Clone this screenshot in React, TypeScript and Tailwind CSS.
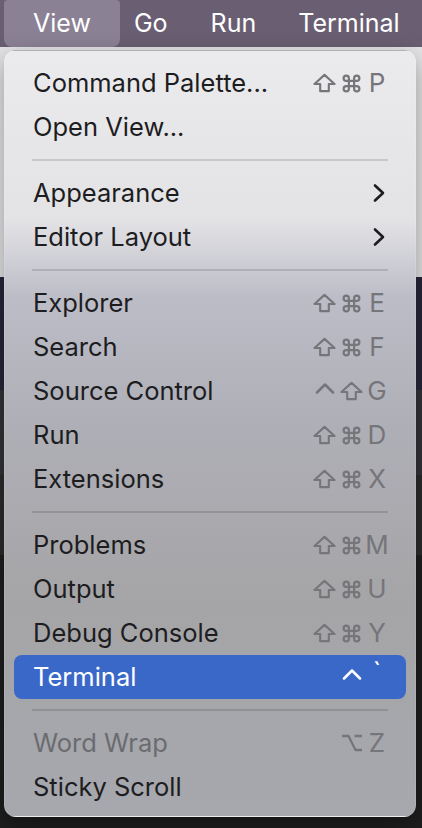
import React from 'react'

type Key = 'shift' | 'cmd' | 'ctrl' | 'opt' | string

type Item =
  | { kind: 'sep' }
  | { kind: 'item'; label: string; keys?: Key[]; submenu?: boolean; disabled?: boolean; active?: boolean }

const items: Item[] = [
  { kind: 'item', label: 'Command Palette...', keys: ['shift', 'cmd', 'P'] },
  { kind: 'item', label: 'Open View...' },
  { kind: 'sep' },
  { kind: 'item', label: 'Appearance', submenu: true },
  { kind: 'item', label: 'Editor Layout', submenu: true },
  { kind: 'sep' },
  { kind: 'item', label: 'Explorer', keys: ['shift', 'cmd', 'E'] },
  { kind: 'item', label: 'Search', keys: ['shift', 'cmd', 'F'] },
  { kind: 'item', label: 'Source Control', keys: ['ctrl', 'shift', 'G'] },
  { kind: 'item', label: 'Run', keys: ['shift', 'cmd', 'D'] },
  { kind: 'item', label: 'Extensions', keys: ['shift', 'cmd', 'X'] },
  { kind: 'sep' },
  { kind: 'item', label: 'Problems', keys: ['shift', 'cmd', 'M'] },
  { kind: 'item', label: 'Output', keys: ['shift', 'cmd', 'U'] },
  { kind: 'item', label: 'Debug Console', keys: ['shift', 'cmd', 'Y'] },
  { kind: 'item', label: 'Terminal', keys: ['', 'ctrl', '`'], active: true },
  { kind: 'sep' },
  { kind: 'item', label: 'Word Wrap', keys: ['', 'opt', 'Z'], disabled: true },
  { kind: 'item', label: 'Sticky Scroll' },
]

function Glyph({ k }: { k: Key }) {
  if (k === 'shift')
    return (
      <svg width="23" height="20" viewBox="0 0 24 20" fill="none" stroke="currentColor" strokeWidth="2.2" strokeLinejoin="round">
        <path d="M12 1.5 L22.5 11 H16.5 V18.5 H7.5 V11 H1.5 Z" />
      </svg>
    )
  if (k === 'cmd')
    return (
      <svg width="21" height="21" viewBox="0 0 24 24" fill="none" stroke="currentColor" strokeWidth="2.5" strokeLinecap="round" strokeLinejoin="round">
        <path d="M15 6v12a3 3 0 1 0 3-3H6a3 3 0 1 0 3 3V6a3 3 0 1 0-3 3h12a3 3 0 1 0-3-3" />
      </svg>
    )
  if (k === 'ctrl')
    return (
      <svg width="20" height="12" viewBox="0 0 20 12" fill="none" stroke="currentColor" strokeWidth="2.5" strokeLinecap="round" strokeLinejoin="round" className="mb-[7px]">
        <path d="M2 10.5 L10 2.5 L18 10.5" />
      </svg>
    )
  if (k === 'opt')
    return (
      <svg width="22" height="18" viewBox="0 0 22 18" fill="none" stroke="currentColor" strokeWidth="2.3" strokeLinejoin="round">
        <path d="M1 2 H7.5 L14.5 16 H21 M13.5 2 H21" />
      </svg>
    )
  if (k === '`') return <span className="leading-none -mt-[10px]">`</span>
  return <span className="leading-none">{k}</span>
}

function Shortcut({ keys, tone }: { keys: Key[]; tone: string }) {
  return (
    <div className={`grid grid-cols-[23px_21px_20px] gap-[5px] items-center justify-items-center text-[26px] ${tone}`}>
      {keys.map((k, i) => (
        <div key={i} className="flex items-center justify-center h-[22px]">
          {k ? <Glyph k={k} /> : null}
        </div>
      ))}
    </div>
  )
}

export default function App() {
  return (
    <div className="relative w-[422px] h-[828px] overflow-hidden bg-[#1e1e1e] font-['Inter','Noto_Sans',sans-serif]">
      {/* menu bar */}
      <div className="h-[47px] bg-[#695e72] flex items-stretch pl-[4px] text-[25px] text-white">
        <div className="px-[29px] flex items-center rounded-b-[8px] rounded-t-[4px] bg-[#8b8194]">View</div>
        <div className="ml-[14px] flex items-center">Go</div>
        <div className="ml-[43px] flex items-center">Run</div>
        <div className="ml-[42px] flex items-center">Terminal</div>
      </div>

      {/* editor behind */}
      <div className="flex flex-col">
        <div className="h-[230px] bg-[#e4e4e6]" />
        <div className="h-[113px] bg-[#26263a]" />
        <div className="h-[85px] bg-[#333338]" />
        <div className="h-[80px] bg-[#2b2b2b]" />
        <div className="h-[273px] bg-[#1e1e1e]" />
      </div>

      {/* dropdown */}
      <div className="absolute top-[50px] left-[4px] w-[412px] rounded-[12px] pt-[10px] pb-[7px] px-[9px] shadow-[0_8px_24px_rgba(0,0,0,0.35)] border border-white/10 bg-[linear-gradient(180deg,#ebebed_0%,#e3e3e6_22%,#bdbdc8_32%,#afafb7_48%,#a5a5a7_72%,#a6a8ae_100%)] text-[25.5px] text-[#1d1d1f]">
        {items.map((it, i) =>
          it.kind === 'sep' ? (
            <div key={i} className="h-[22px] flex items-center px-[18px]">
              <div className="h-[2px] w-full bg-black/[0.13]" />
            </div>
          ) : (
            <div
              key={i}
              className={`h-[44px] flex items-center justify-between px-[19px] rounded-[8px] ${
                it.active ? 'bg-[#3a68c9] text-white' : it.disabled ? 'text-[#6b6b70]' : ''
              }`}
            >
              <span className="leading-none">{it.label}</span>
              {it.keys ? (
                <Shortcut keys={it.keys} tone={it.active ? 'text-white' : 'text-[#75757a]'} />
              ) : it.submenu ? (
                <svg width="14" height="20" viewBox="0 0 14 20" fill="none" stroke="currentColor" strokeWidth="2.6" strokeLinecap="round" strokeLinejoin="round" className="mr-[1px]">
                  <path d="M3 2.5 L11 10 L3 17.5" />
                </svg>
              ) : null}
            </div>
          )
        )}
      </div>
    </div>
  )
}
